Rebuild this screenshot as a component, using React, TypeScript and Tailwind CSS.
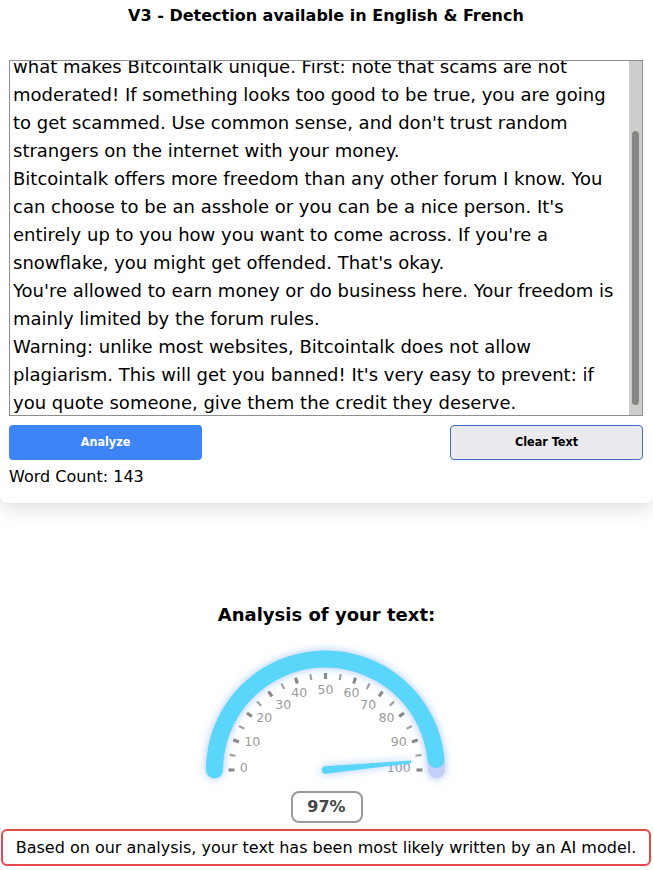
import { useEffect, useRef } from "react";

const TEXT = `Hello and welcome to Bitcointalk!

Before you start posting, let me explain
what makes Bitcointalk unique. First: note that scams are not moderated! If something looks too good to be true, you are going to get scammed. Use common sense, and don't trust random strangers on the internet with your money.
Bitcointalk offers more freedom than any other forum I know. You can choose to be an asshole or you can be a nice person. It's entirely up to you how you want to come across. If you're a snowflake, you might get offended. That's okay.
You're allowed to earn money or do business here. Your freedom is mainly limited by the forum rules.
Warning: unlike most websites, Bitcointalk does not allow plagiarism. This will get you banned! It's very easy to prevent: if you quote someone, give them the credit they deserve.`;

const LABELS: [string, number, number][] = [
  ["0", -81.7, -2.3],
  ["10", -73.3, -28.3],
  ["20", -61.3, -52.3],
  ["30", -42.3, -65.7],
  ["40", -26.3, -77.3],
  ["50", 0, -81],
  ["60", 26, -77.3],
  ["70", 42.7, -65.7],
  ["80", 61, -52.3],
  ["90", 73.3, -28.3],
  ["100", 73.3, -2.3],
];

function Gauge({ value }: { value: number }) {
  const cx = 138.5;
  const cy = 130;
  const R = 111;
  const th = Math.PI * (1 - value / 100);
  const ex = cx + R * Math.cos(th);
  const ey = cy - R * Math.sin(th);
  const ticks = Array.from({ length: 21 }, (_, i) => {
    const a = Math.PI * (1 - i / 20);
    const major = i % 2 === 0;
    const r1 = 91;
    const r2 = 97;
    return {
      x1: cx + r1 * Math.cos(a),
      y1: cy - r1 * Math.sin(a),
      x2: cx + r2 * Math.cos(a),
      y2: cy - r2 * Math.sin(a),
      major,
    };
  });
  const ux = Math.cos(th);
  const uy = -Math.sin(th);
  const px = -uy;
  const py = ux;
  const L = 86;
  const bw = 3.8;
  const tw = 1.3;
  const tipX = cx + L * ux;
  const tipY = cy + L * uy;
  const needle = `${cx + px * bw},${cy + py * bw} ${tipX + px * tw},${tipY + py * tw} ${tipX - px * tw},${tipY - py * tw} ${cx - px * bw},${cy - py * bw}`;
  return (
    <svg width="280" height="150" viewBox="0 0 280 150">
      <defs>
        <filter id="glow" x="-30%" y="-40%" width="160%" height="180%">
          <feGaussianBlur in="SourceAlpha" stdDeviation="4.5" result="b" />
          <feFlood floodColor="#5a9bff" floodOpacity="0.55" />
          <feComposite in2="b" operator="in" result="s" />
          <feMerge>
            <feMergeNode in="s" />
            <feMergeNode in="SourceGraphic" />
          </feMerge>
        </filter>
      </defs>
      <g filter="url(#glow)">
        <path
          d={`M ${cx - R} ${cy} A ${R} ${R} 0 0 1 ${cx + R} ${cy}`}
          fill="none"
          stroke="#c6cff7"
          strokeWidth="17"
          strokeLinecap="round"
        />
        <path
          d={`M ${cx - R} ${cy} A ${R} ${R} 0 0 1 ${ex} ${ey}`}
          fill="none"
          stroke="#5ad6fa"
          strokeWidth="17"
          strokeLinecap="round"
        />
      </g>
      {ticks.map((t, i) => (
        <line
          key={i}
          x1={t.x1}
          y1={t.y1}
          x2={t.x2}
          y2={t.y2}
          stroke={t.major ? "#8a8a8a" : "#a0a0a0"}
          strokeWidth={t.major ? 3.2 : 2.2}
        />
      ))}
      {LABELS.map(([s, dx, dy]) => (
        <text
          key={s}
          x={cx + dx}
          y={cy + dy}
          textAnchor="middle"
          dominantBaseline="central"
          fontFamily="DejaVu Sans, sans-serif"
          fontSize="12.5"
          fill="#9b9b9b"
        >
          {s}
        </text>
      ))}
      <g filter="url(#glow)">
        <polygon points={needle} fill="#5ad6fa" />
        <circle cx={cx} cy={cy} r={bw} fill="#5ad6fa" />
      </g>
    </svg>
  );
}

export default function App() {
  const ref = useRef<HTMLTextAreaElement>(null);
  useEffect(() => {
    if (ref.current) ref.current.scrollTop = 95;
  }, []);
  const words = TEXT.trim().split(/\s+/).length;
  return (
    <div className="min-h-[870px] w-[653px] bg-white font-['DejaVu_Sans',sans-serif] text-black">
      <div className="rounded-b-lg bg-white pb-[14px] pl-[9px] pr-[10px] pt-[4px] shadow-[0_6px_18px_rgba(0,0,0,0.13)]">
        <h1 className="text-center text-[16px] font-bold leading-[24px]">
          V3 - Detection available in English &amp; French
        </h1>
        <div className="mt-[32px] flex h-[356px] w-[634px] border border-solid border-[#8f8f8f] bg-white">
          <textarea
            ref={ref}
            readOnly
            defaultValue={TEXT}
            className="block h-full w-[619px] resize-none overflow-hidden border-0 bg-white px-[3px] py-[3px] font-['DejaVu_Sans',sans-serif] text-[18px] leading-[28px] text-black outline-none"
          />
          <div className="flex h-full w-[13px] flex-col items-center bg-[#cdcdcd]">
            <div className="mt-[70px] h-[274px] w-[7px] rounded-full bg-[#878683]" />
          </div>
        </div>
        <div className="mt-[9px] flex justify-between">
          <button className="h-[35px] w-[193px] rounded-[4px] bg-[#3d84f6] font-['DejaVu_Sans_Condensed','DejaVu_Sans',sans-serif] text-[12.5px] font-bold text-white font-stretch-condensed">
            Analyze
          </button>
          <button className="h-[35px] w-[193px] rounded-[4px] border border-solid border-[#3e6fc4] bg-[#e9e9ee] font-['DejaVu_Sans_Condensed','DejaVu_Sans',sans-serif] text-[12.5px] font-bold text-black font-stretch-condensed">
            Clear Text
          </button>
        </div>
        <div className="mt-[5px] text-[16px] leading-[24px]">Word Count: {words}</div>
      </div>
      <div className="mt-[98px] flex flex-col items-center">
        <h2 className="text-[18px] font-bold leading-[27px]">Analysis of your text:</h2>
        <div className="mt-[12px] flex justify-center">
          <Gauge value={97} />
        </div>
        <div className="mt-[1px] flex h-[32px] w-[72px] items-center justify-center rounded-lg border-2 border-solid border-[#9a9a9a] text-[16px] font-bold text-[#454545]">
          97%
        </div>
      </div>
      <div className="ml-[1px] mt-[6px] flex h-[37px] w-[650px] items-center justify-center rounded-[6px] border-2 border-solid border-[#e5484d] text-[16px]">
        Based on our analysis, your text has been most likely written by an AI model.
      </div>
    </div>
  );
}
